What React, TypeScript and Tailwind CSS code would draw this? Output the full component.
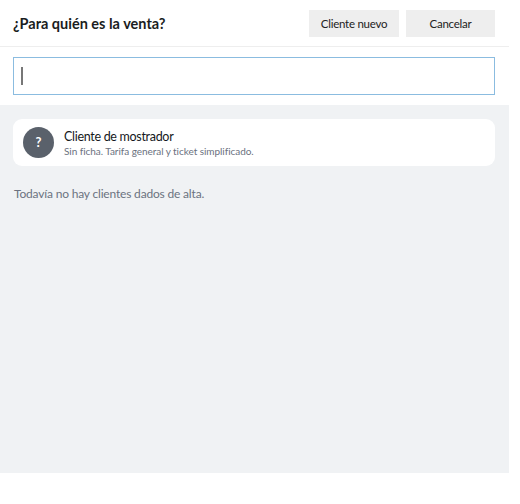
export default function App() {
  return (
    <div className="w-[520px] h-[504px] bg-white overflow-hidden font-['Lato','Noto_Sans',sans-serif]">
      <div className="w-[509px] h-[473px] flex flex-col bg-[#f0f2f4]">
        <header className="h-[47px] shrink-0 bg-white border-b border-[#eeeeee] flex items-center justify-between pl-[13px] pr-[14px]">
          <h1 className="pt-[1px] text-[14.5px] font-bold text-[#1a1d21]">¿Para quién es la venta?</h1>
          <div className="flex gap-[7px]">
            <button className="w-[90px] h-[27px] pt-[1px] bg-[#eeeeee] text-[11.5px] tracking-[-0.25px] text-[#222222]">Cliente nuevo</button>
            <button className="w-[89px] h-[27px] pt-[1px] bg-[#eeeeee] text-[11.5px] tracking-[-0.25px] text-[#222222]">Cancelar</button>
          </div>
        </header>
        <div className="h-[58px] shrink-0 bg-white px-[13px] pt-[10px]">
          <div className="w-[482px] h-[38px] border border-[#8bbce0] flex items-center pl-[7px]">
            <span className="w-[1.5px] h-[18px] bg-[#777777]" />
          </div>
        </div>
        <div className="flex-1 px-[13px] pt-[14px]">
          <div className="w-[482px] h-[47px] bg-white rounded-[9px] flex items-center pl-[10px] gap-[10px]">
            <div className="w-[31px] h-[31px] rounded-full bg-[#5a616b] flex items-center justify-center text-white text-[13px] font-bold">?</div>
            <div className="flex flex-col">
              <span className="pt-[1px] text-[12.5px] leading-[17px] tracking-[-0.3px] text-[#15181c]">Cliente de mostrador</span>
              <span className="text-[10px] leading-[13px] tracking-[-0.05px] text-[#6b7280]">Sin ficha. Tarifa general y ticket simplificado.</span>
            </div>
          </div>
          <p className="mt-[19px] pl-[1px] text-[12px] tracking-[-0.18px] text-[#6b7280]">Todavía no hay clientes dados de alta.</p>
        </div>
      </div>
    </div>
  );
}
